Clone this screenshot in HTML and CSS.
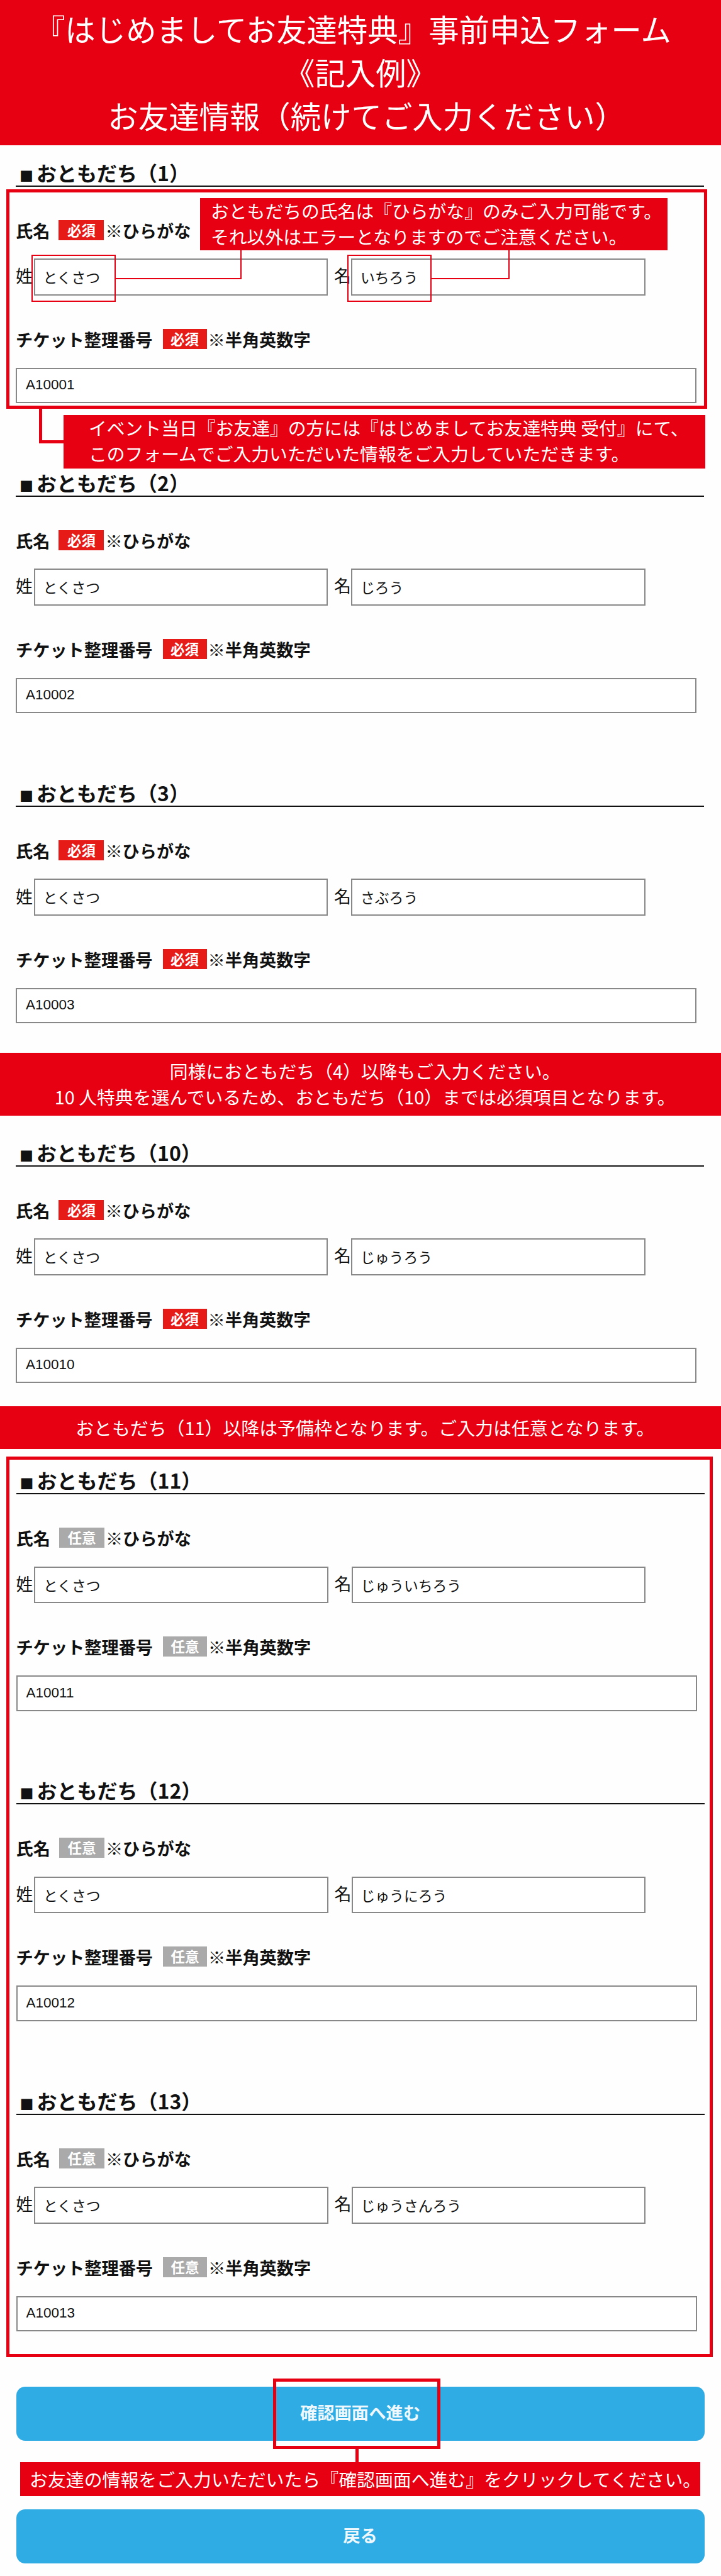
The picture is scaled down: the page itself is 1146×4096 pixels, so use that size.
FILE: index.html
```html
<!DOCTYPE html>
<html lang="ja">
<head>
    <meta charset="UTF-8">
    <meta name="viewport" content="width=device-width, initial-scale=1.0">
    <title>事前申込フォーム 記入例</title>
    <link rel="stylesheet" href="styles.css">
</head>
<body>
    <header class="page-header">
        <div class="trim-start">『はじめましてお友達特典』事前申込フォーム</div>
        <div>《記入例》</div>
        <div class="trim-end">お友達情報（続けてご入力ください）</div>
    </header>

    <form class="form">
        <section class="friend">
            <h2><span class="square">■</span>おともだち（1）</h2>
            <div class="label">氏名 <span class="badge">必須</span>※ひらがな</div>
            <div class="name-row">
                <span>姓</span><input type="text" value="とくさつ">
                <span class="mei">名</span><input type="text" value="いちろう">
            </div>
            <div class="label ticket">チケット整理番号 <span class="badge">必須</span>※半角英数字</div>
            <input class="number" type="text" value="A10001">

            <!-- 注釈 -->
            <div class="frame"></div>
            <div class="mark mark-sei"></div>
            <div class="mark mark-mei"></div>
            <div class="line line-sei"></div>
            <div class="line line-mei"></div>
            <div class="line line-ticket"></div>
            <div class="callout callout-name">おともだちの氏名は『ひらがな』のみご入力可能です。<br>それ以外はエラーとなりますのでご注意ください。</div>
            <div class="callout callout-ticket">イベント当日『お友達』の方には『はじめましてお友達特典 受付』にて、<br>このフォームでご入力いただいた情報をご入力していただきます。</div>
        </section>

        <section class="friend">
            <h2><span class="square">■</span>おともだち（2）</h2>
            <div class="label">氏名 <span class="badge">必須</span>※ひらがな</div>
            <div class="name-row">
                <span>姓</span><input type="text" value="とくさつ">
                <span class="mei">名</span><input type="text" value="じろう">
            </div>
            <div class="label ticket">チケット整理番号 <span class="badge">必須</span>※半角英数字</div>
            <input class="number" type="text" value="A10002">
        </section>

        <section class="friend">
            <h2><span class="square">■</span>おともだち（3）</h2>
            <div class="label">氏名 <span class="badge">必須</span>※ひらがな</div>
            <div class="name-row">
                <span>姓</span><input type="text" value="とくさつ">
                <span class="mei">名</span><input type="text" value="さぶろう">
            </div>
            <div class="label ticket">チケット整理番号 <span class="badge">必須</span>※半角英数字</div>
            <input class="number" type="text" value="A10003">
        </section>

        <div class="banner">
            <div class="trim-end">同様におともだち（4）以降もご入力ください。</div>
            <div class="trim-end">10 人特典を選んでいるため、おともだち（10）までは必須項目となります。</div>
        </div>

        <section class="friend">
            <h2><span class="square">■</span>おともだち（10）</h2>
            <div class="label">氏名 <span class="badge">必須</span>※ひらがな</div>
            <div class="name-row">
                <span>姓</span><input type="text" value="とくさつ">
                <span class="mei">名</span><input type="text" value="じゅうろう">
            </div>
            <div class="label ticket">チケット整理番号 <span class="badge">必須</span>※半角英数字</div>
            <input class="number" type="text" value="A10010">
        </section>

        <div class="banner banner-optional">
            <div class="trim-end">おともだち（11）以降は予備枠となります。ご入力は任意となります。</div>
        </div>

        <div class="optional-group">
            <section class="friend">
                <h2><span class="square">■</span>おともだち（11）</h2>
                <div class="label">氏名 <span class="badge optional">任意</span>※ひらがな</div>
                <div class="name-row">
                    <span>姓</span><input type="text" value="とくさつ">
                    <span class="mei">名</span><input type="text" value="じゅういちろう">
                </div>
                <div class="label ticket">チケット整理番号 <span class="badge optional">任意</span>※半角英数字</div>
                <input class="number" type="text" value="A10011">
            </section>

            <section class="friend">
                <h2><span class="square">■</span>おともだち（12）</h2>
                <div class="label">氏名 <span class="badge optional">任意</span>※ひらがな</div>
                <div class="name-row">
                    <span>姓</span><input type="text" value="とくさつ">
                    <span class="mei">名</span><input type="text" value="じゅうにろう">
                </div>
                <div class="label ticket">チケット整理番号 <span class="badge optional">任意</span>※半角英数字</div>
                <input class="number" type="text" value="A10012">
            </section>

            <section class="friend">
                <h2><span class="square">■</span>おともだち（13）</h2>
                <div class="label">氏名 <span class="badge optional">任意</span>※ひらがな</div>
                <div class="name-row">
                    <span>姓</span><input type="text" value="とくさつ">
                    <span class="mei">名</span><input type="text" value="じゅうさんろう">
                </div>
                <div class="label ticket">チケット整理番号 <span class="badge optional">任意</span>※半角英数字</div>
                <input class="number" type="text" value="A10013">
            </section>
        </div>

        <div class="actions">
            <button class="btn" type="button">確認画面へ進む</button>
            <div class="submit-frame"></div>
            <div class="line line-submit"></div>
            <div class="callout-submit">お友達の情報をご入力いただいたら『確認画面へ進む』をクリックしてください。</div>
            <button class="btn" type="button">戻る</button>
        </div>
    </form>
</body>
</html>
```
FILE: styles.css
```css
* {
    box-sizing: border-box;
}
body {
    margin: 0;
    background: #fefefe;
    color: #111;
    font-family: "Noto Sans CJK JP", sans-serif;
    text-spacing-trim: space-all;
}
.page-header {
    height: 231px;
    padding-top: 11px;
    background: #e60012;
    color: #fff;
    font-size: 48.4px;
    line-height: 69px;
    text-align: center;
    white-space: nowrap;
}
/* 行頭・行末の約物の空きを詰める */
.trim-start {
    margin-left: -0.5em;
}
.trim-end {
    margin-right: -0.5em;
}
.page-header .trim-end {
    margin-right: -0.4em;
}
.form {
    padding-top: 20.5px;
}
.friend {
    position: relative;
    margin: 0 27px 103.7px 25px;
}
.friend h2 {
    height: 45px;
    margin: 0;
    padding-left: 1px;
    border-bottom: 2px solid #111;
    font-size: 32px;
    line-height: 44px;
    font-weight: 700;
    white-space: nowrap;
}
.square {
    display: inline-block;
    width: 32px;
    font-size: 22px;
    line-height: 40px;
    text-align: center;
}
.label {
    display: flex;
    align-items: center;
    height: 32px;
    margin: 53px 0 29.5px;
    font-size: 27.2px;
    line-height: 30px;
    font-weight: 700;
    white-space: nowrap;
}
.badge {
    width: 72px;
    height: 32px;
    margin: 0 2px 0 14px;
    background: #e61a17;
    color: #fff;
    font-size: 22.5px;
    line-height: 31px;
    font-weight: 700;
    text-align: center;
}
.ticket .badge {
    width: 70px;
    margin-left: 16px;
}
.badge.optional {
    background: #aaa;
}
.name-row {
    display: flex;
    align-items: center;
    font-size: 27px;
}
.name-row span {
    width: 28.5px;
    height: 58px;
    line-height: 54px;
}
.name-row .mei {
    width: 27px;
    margin-left: 10px;
}
.friend input {
    display: block;
    width: 467.5px;
    height: 58.5px;
    padding: 0 13px;
    border: 2px solid #888;
    border-radius: 0;
    background: #fff;
    color: #111;
    font-family: "Noto Sans CJK JP", sans-serif;
    font-size: 22.8px;
}
.friend .number {
    width: 1082px;
    height: 56.5px;
    padding-left: 14px;
    padding-bottom: 2px;
    font-family: "Liberation Sans", sans-serif;
    font-size: 22.5px;
}
.label.ticket {
    margin-bottom: 30px;
}
.banner {
    height: 99.5px;
    margin: -57px 0 36px;
    padding-top: 8px;
    background: #e60012;
    color: #fff;
    font-size: 28.8px;
    line-height: 41px;
    text-align: center;
    white-space: nowrap;
}
.banner-optional {
    height: 68px;
    margin: -67px 0 12px;
    padding-top: 13px;
    font-size: 28.9px;
}
.optional-group {
    width: 1123px;
    height: 1432.5px;
    margin-left: 9.5px;
    padding-top: 10.5px;
    border: 5px solid #e60012;
}
.optional-group .friend {
    margin-left: 11px;
    margin-right: 8px;
}

/* 注釈 */
.frame {
    position: absolute;
    top: 49px;
    left: -15.5px;
    width: 1114.5px;
    height: 349px;
    border: 5px solid #e60012;
}
.mark {
    position: absolute;
    top: 153.5px;
    width: 133.5px;
    height: 75px;
    border: 2px solid #e60012;
}
.mark-sei {
    left: 25px;
}
.mark-mei {
    left: 527px;
}
.line {
    position: absolute;
    border: 0 solid #e60012;
}
.line-sei,
.line-mei {
    top: 145px;
    height: 47.5px;
    border-width: 0 2px 2px 0;
}
.line-sei {
    left: 158px;
    width: 200.5px;
}
.line-mei {
    left: 660px;
    width: 124.5px;
}
.line-ticket {
    top: 397px;
    left: 37px;
    width: 40px;
    height: 56px;
    border-width: 0 0 5px 5px;
}
.callout {
    position: absolute;
    background: #e60012;
    color: #fff;
    font-size: 28.8px;
    line-height: 41px;
    white-space: nowrap;
}
.callout-name {
    top: 63.5px;
    left: 293px;
    width: 743px;
    height: 83px;
    padding: 0 0 0 17px;
}
.callout-name,
.callout-ticket {
    line-height: 40.5px;
}
.callout-ticket {
    top: 408.5px;
    left: 76px;
    width: 1020px;
    height: 84.5px;
    padding: 0 0 0 40px;
}
.actions {
    position: relative;
    margin: 46.5px 26.5px 0 25.5px;
}
.btn {
    display: block;
    width: 100%;
    height: 86px;
    padding: 0 0 6px;
    border: 0;
    border-radius: 14px;
    background: #30ace5;
    color: #eef8fd;
    font-family: inherit;
    font-size: 27.3px;
    font-weight: 700;
}
.submit-frame {
    position: absolute;
    top: -13px;
    left: 408.5px;
    width: 265.5px;
    height: 112px;
    border: 5px solid #e60012;
}
.line-submit {
    top: 98px;
    left: 539.5px;
    height: 23px;
    border-left-width: 5px;
}
.callout-submit {
    width: 1081px;
    height: 54px;
    margin: 34px 0 21.5px 6.5px;
    padding-left: 15px;
    background: #e60012;
    color: #fff;
    font-size: 28.9px;
    line-height: 53px;
    white-space: nowrap;
}
```
